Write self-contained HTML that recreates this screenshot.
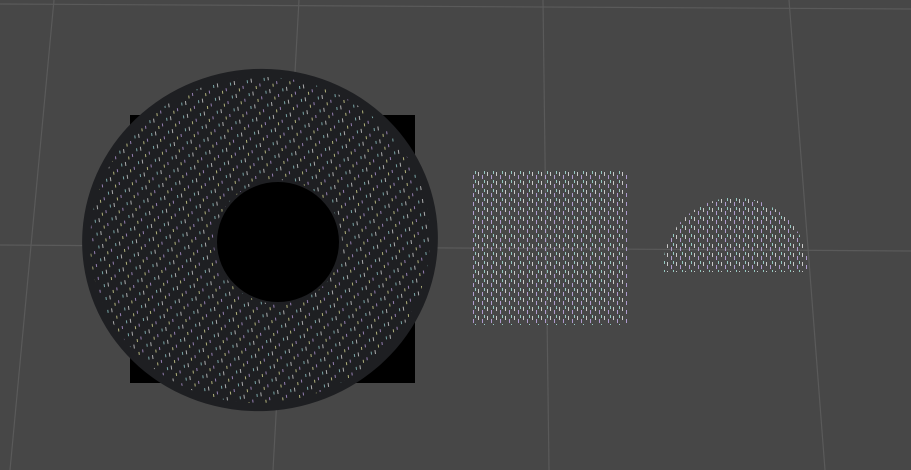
<!DOCTYPE html>
<html><head><style>
html,body{margin:0;padding:0;background:#474747;width:911px;height:470px;overflow:hidden}
</style></head><body>
<svg width="911" height="470" viewBox="0 0 911 470" xmlns="http://www.w3.org/2000/svg">
<defs>
<pattern id="d" width="17" height="13" patternUnits="userSpaceOnUse">
<rect x="1" y="1" width="1" height="4" fill="#e8e8e8"/>
<rect x="9" y="7" width="1" height="3" fill="#c8a8f0"/>
<rect x="14" y="2" width="1" height="3" fill="#a0e0e0"/>
<rect x="5" y="9" width="1" height="3" fill="#f0f0a0"/>
</pattern>
<pattern id="d2" width="9" height="9" patternUnits="userSpaceOnUse">
<rect x="1" y="1" width="1" height="4" fill="#e8e8e8"/>
<rect x="5" y="4" width="1" height="4" fill="#c8b0f0"/>
<rect x="7" y="0" width="1" height="3" fill="#a8e8e0"/>
</pattern>
</defs>
<g stroke="#5a5a5a" stroke-width="1.2" fill="none">
<line x1="0" y1="4" x2="911" y2="9"/>
<line x1="0" y1="245" x2="911" y2="251"/>
<line x1="54" y1="0" x2="10" y2="470"/>
<line x1="299" y1="0" x2="273" y2="470"/>
<line x1="543" y1="0" x2="549" y2="470"/>
<line x1="789" y1="0" x2="825" y2="470"/>
</g>
<rect x="130" y="115" width="285" height="268" fill="#000"/>
<ellipse cx="260" cy="240" rx="178" ry="171" transform="rotate(-8 260 240)" fill="#1e1f22"/>
<ellipse cx="260" cy="240" rx="170" ry="163" transform="rotate(-8 260 240)" fill="url(#d)" opacity="0.7"/>
<ellipse cx="278" cy="242" rx="64" ry="62" fill="#1e1f22"/>
<ellipse cx="278" cy="242" rx="61" ry="60" fill="#000"/>
<rect x="470" y="171" width="158" height="154" fill="url(#d2)" opacity="0.8"/>
<path d="M663 268 A72 70 0 0 1 808 268 L808 272 L663 272 Z" fill="url(#d2)" opacity="0.8"/>
</svg>
</body></html>
